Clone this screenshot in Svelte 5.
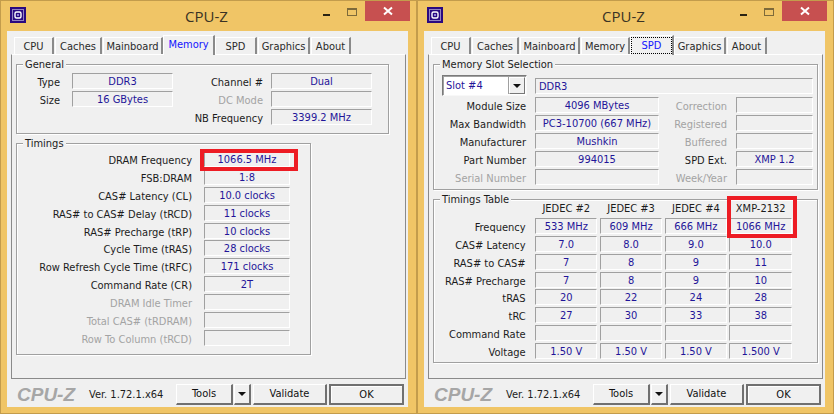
<script>
  const tabs = ['CPU', 'Caches', 'Mainboard', 'Memory', 'SPD', 'Graphics', 'About'];
  const general = [
    ['Type', 'DDR3', 'Channel #', 'Dual', false],
    ['Size', '16 GBytes', 'DC Mode', '', true],
    ['', null, 'NB Frequency', '3399.2 MHz', false]
  ];
  const timings = [
    ['DRAM Frequency', '1066.5 MHz'],
    ['FSB:DRAM', '1:8'],
    ['CAS# Latency (CL)', '10.0 clocks'],
    ['RAS# to CAS# Delay (tRCD)', '11 clocks'],
    ['RAS# Precharge (tRP)', '10 clocks'],
    ['Cycle Time (tRAS)', '28 clocks'],
    ['Row Refresh Cycle Time (tRFC)', '171 clocks'],
    ['Command Rate (CR)', '2T'],
    ['DRAM Idle Timer', '', true],
    ['Total CAS# (tRDRAM)', '', true],
    ['Row To Column (tRCD)', '', true]
  ];
  const slot = [
    ['Module Size', '4096 MBytes', false, 'Correction', '', true],
    ['Max Bandwidth', 'PC3-10700 (667 MHz)', false, 'Registered', '', true],
    ['Manufacturer', 'Mushkin', false, 'Buffered', '', true],
    ['Part Number', '994015', false, 'SPD Ext.', 'XMP 1.2', false],
    ['Serial Number', '', true, 'Week/Year', '', true]
  ];
  const heads = ['JEDEC #2', 'JEDEC #3', 'JEDEC #4', 'XMP-2132'];
  const table = [
    ['Frequency', '533 MHz', '609 MHz', '666 MHz', '1066 MHz'],
    ['CAS# Latency', '7.0', '8.0', '9.0', '10.0'],
    ['RAS# to CAS#', '7', '8', '9', '11'],
    ['RAS# Precharge', '7', '8', '9', '10'],
    ['tRAS', '20', '22', '24', '28'],
    ['tRC', '27', '30', '33', '38'],
    ['Command Rate', '', '', '', ''],
    ['Voltage', '1.50 V', '1.50 V', '1.50 V', '1.500 V']
  ];
</script>

{#snippet appIcon()}
  <svg class="icon" viewBox="0 0 16 16" width="16" height="16" aria-hidden="true">
    <rect width="16" height="16" fill="#2a0a80" />
    <rect x="2.5" y="2.5" width="11" height="11" fill="none" stroke="#fff" stroke-dasharray="1 1" />
    <rect x="5" y="5" width="6" height="6" rx="1.5" fill="none" stroke="#fff" stroke-width="1.4" />
    <rect x="7" y="7" width="2" height="2" fill="#8f80d8" />
  </svg>
{/snippet}

{#snippet titlebar()}
  <header class="titlebar">
    {@render appIcon()}
    <span class="title">CPU-Z</span>
    <div class="controls">
      <span class="min"></span>
      <span class="max"></span>
      <span class="close">
        <svg viewBox="0 0 10 10" width="10" height="10" aria-hidden="true">
          <path d="M1 1.5 9 8.5M9 1.5 1 8.5" stroke="#fff" stroke-width="2" fill="none" />
        </svg>
      </span>
    </div>
  </header>
{/snippet}

{#snippet tabRow(active)}
  <nav class="tabs">
    {#each tabs as t}
      <span class="tab" class:active={t === active} class:focus={t === active && t === 'SPD'}><span>{t}</span></span>
    {/each}
  </nav>
{/snippet}

{#snippet footer()}
  <footer class="footer">
    <span class="logo">CPU-Z</span>
    <span class="ver">Ver. 1.72.1.x64</span>
    <span class="btn tools">Tools</span>
    <span class="btn arrow"><i class="tri"></i></span>
    <span class="btn validate">Validate</span>
    <span class="btn ok">OK</span>
  </footer>
{/snippet}

<div class="screen">
  <section class="win">
    {@render titlebar()}
    <div class="client">
      {@render tabRow('Memory')}
      <div class="panel">
        <div class="group general">
          <span class="legend">General</span>
          <div class="general-grid">
            {#each general as [a, b, c, d, dis]}
              <span class="lab">{a}</span>
              {#if b === null}<span></span>{:else}<span class="val">{b}</span>{/if}
              <span class="lab" class:dis>{c}</span>
              <span class="val">{d}</span>
            {/each}
          </div>
        </div>
        <div class="group timings">
          <span class="legend">Timings</span>
          <div class="timing-grid">
            {#each timings as [a, b, dis]}
              <span class="lab" class:dis>{a}</span>
              <span class="val">{b}</span>
            {/each}
          </div>
          <span class="mark mark-dram"></span>
        </div>
      </div>
      {@render footer()}
    </div>
  </section>

  <section class="win">
    {@render titlebar()}
    <div class="client">
      {@render tabRow('SPD')}
      <div class="panel">
        <div class="group slot">
          <span class="legend">Memory Slot Selection</span>
          <div class="slot-top">
            <span class="select">Slot #4<span class="drop"><i class="tri"></i></span></span>
            <span class="val left">DDR3</span>
          </div>
          <div class="slot-grid">
            {#each slot as [a, b, d1, c, e, d2]}
              <span class="lab" class:dis={d1}>{a}</span>
              <span class="val">{b}</span>
              <span class="lab" class:dis={d2}>{c}</span>
              <span class="val">{e}</span>
            {/each}
          </div>
        </div>
        <div class="group ttable">
          <span class="legend">Timings Table</span>
          <div class="table-grid">
            <span></span>
            {#each heads as h}<span class="head">{h}</span>{/each}
            {#each table as row}
              <span class="lab">{row[0]}</span>
              {#each row.slice(1) as v}<span class="val">{v}</span>{/each}
            {/each}
          </div>
          <span class="mark mark-xmp"></span>
        </div>
      </div>
      {@render footer()}
    </div>
  </section>
</div>

<style>
  :global(body) {
    margin: 0;
    background: #fff;
  }
  .screen {
    display: flex;
    width: 835px;
    height: 414px;
    font: 11px/16px "DejaVu Sans Condensed", "DejaVu Sans", sans-serif;
    color: #1c1c1c;
    overflow: hidden;
  }
  .win {
    box-sizing: border-box;
    flex: 0 0 417px;
    height: 414px;
    background: #f0c566;
    border: 1px solid #c39c4c;
  }
  .titlebar {
    display: flex;
    align-items: flex-start;
    height: 30px;
  }
  .icon {
    margin: 6px 0 0 9px;
    flex: none;
  }
  .title {
    margin: 4px 0 0 159px;
    font: 15px/22px "Open Sans", sans-serif;
    color: #3a3324;
  }
  .controls {
    display: flex;
    margin-left: auto;
    margin-right: 6px;
  }
  .min {
    width: 7px;
    height: 2px;
    margin: 13px 17px 0 0;
    background: #2b2412;
  }
  .max {
    box-sizing: border-box;
    width: 10px;
    height: 8px;
    margin: 7px 8px 0 0;
    border: 1px solid #7d6a3a;
    border-top-width: 2px;
  }
  .close {
    display: flex;
    align-items: center;
    justify-content: center;
    width: 45px;
    height: 20px;
    background: #c75050;
  }
  .client {
    box-sizing: border-box;
    width: 401px;
    height: 376px;
    margin-left: 6px;
    background: #f0f0f0;
  }
  .tabs {
    display: flex;
    align-items: flex-end;
    height: 23px;
    padding-left: 7px;
  }
  .tab {
    box-sizing: border-box;
    position: relative;
    height: 17px;
    margin-right: 1px;
    padding-top: 1px;
    text-align: center;
    color: #2a2a2a;
    line-height: 15px;
    background: #f0f0f0;
    border-top: 1px solid #fff;
    border-left: 1px solid #fff;
    border-right: 2px solid #8a8a8a;
  }
  .tab:nth-child(1) { width: 40px; }
  .tab:nth-child(2) { width: 47px; }
  .tab:nth-child(3) { width: 60px; }
  .tab:nth-child(4) { width: 49px; }
  .tab:nth-child(5) { width: 42px; }
  .tab:nth-child(6) { width: 52px; }
  .tab:nth-child(7) { width: 40px; }
  .tab.active {
    z-index: 1;
    height: 20px;
    margin: 0 0 -1px -1px;
    padding-top: 1px;
    color: #1414ff;
  }
  .tab.active:nth-child(4) { width: 52px; }
  .tab.active:nth-child(5) { width: 44px; }
  .tab.focus span {
    display: block;
    margin: 1px 1px 0 1px;
    outline: 1px dotted #000;
    outline-offset: 0;
    height: 15px;
  }
  .panel {
    box-sizing: border-box;
    display: flex;
    flex-direction: column;
    gap: 9px;
    width: 395px;
    height: 325px;
    margin-left: 4px;
    padding: 9px 0 0 4px;
    border: 1px solid #8a8a8a;
    border-top-color: #fff;
  }
  .group {
    box-sizing: border-box;
    position: relative;
    border: 1px solid #a0a0a0;
    box-shadow: inset 1px 1px 0 #fff, 1px 1px 0 #fff;
  }
  .legend {
    position: absolute;
    top: -8px;
    left: 6px;
    padding: 0 2px;
    background: #f0f0f0;
  }
  .general { width: 373px; height: 70px; padding-top: 8px; }
  .timings { width: 295px; height: 212px; padding-top: 7px; }
  .slot { width: 385px; height: 126px; padding-top: 10px; }
  .ttable { width: 385px; height: 164px; }

  .lab {
    display: block;
    text-align: right;
    padding-top: 2px;
    white-space: nowrap;
  }
  .dis { color: #a3a3a3; }
  .val {
    box-sizing: border-box;
    display: block;
    height: 16px;
    line-height: 16px;
    text-align: center;
    white-space: nowrap;
    color: #1f1599;
    border: 1px solid #a0a0a0;
    border-right-color: #fff;
    border-bottom-color: #fff;
  }
  .val.left {
    text-align: left;
    padding-left: 3px;
    width: 278px;
  }
  .head {
    display: block;
    text-align: center;
    padding-top: 1px;
    white-space: nowrap;
  }
  .general-grid {
    display: grid;
    grid-template-columns: 55px 101px 98px 101px;
    grid-auto-rows: 18px;
  }
  .general-grid .lab:nth-child(4n + 1) { padding-right: 12px; }
  .general-grid .lab:nth-child(4n + 3) { padding-right: 8px; }
  .timing-grid {
    display: grid;
    grid-template-columns: 187px 86px;
    grid-auto-rows: 17.9px;
  }
  .timing-grid .lab { padding-right: 12px; }
  .slot-top {
    display: flex;
    align-items: center;
    gap: 8px;
    height: 21px;
    margin-bottom: 1px;
    padding-left: 8px;
  }
  .select {
    box-sizing: border-box;
    display: flex;
    justify-content: space-between;
    align-items: center;
    width: 85px;
    height: 21px;
    padding: 0 1px 0 3px;
    background: #fff;
    color: #1f1599;
    border: 1px solid #7a7a7a;
    border-right-color: #f8f8f8;
    border-bottom-color: #f8f8f8;
    box-shadow: inset 1px 1px 0 #a0a0a0;
  }
  .drop {
    box-sizing: border-box;
    display: flex;
    align-items: center;
    justify-content: center;
    width: 16px;
    height: 17px;
    background: #f0f0f0;
    border: 1px solid #fff;
    border-right-color: #777;
    border-bottom-color: #777;
    box-shadow: -1px 0 0 #a0a0a0;
  }
  .tri {
    width: 0;
    height: 0;
    border-left: 4px solid transparent;
    border-right: 4px solid transparent;
    border-top: 4px solid #111;
  }
  .slot-grid {
    display: grid;
    grid-template-columns: 101px 124px 77px 77px;
    grid-auto-rows: 18px;
  }
  .slot-grid .lab { padding-right: 9px; }
  .table-grid {
    display: grid;
    grid-template-columns: 98.67px repeat(4, 62.5px);
    column-gap: 2.33px;
    grid-auto-rows: 17.9px;
  }
  .table-grid .lab { padding-right: 7px; }
  .mark {
    box-sizing: border-box;
    position: absolute;
    border: 4px solid #ed1c24;
  }
  .mark-dram { left: 183px; top: 5px; width: 98px; height: 22px; }
  .mark-xmp { left: 293px; top: -4px; width: 70px; height: 42px; }

  .footer {
    display: flex;
    align-items: flex-start;
    height: 27px;
    padding: 5px 0 0 10px;
  }
  .logo {
    width: 72px;
    font: italic bold 19px/22px "Liberation Sans", Arial, sans-serif;
    color: #a6a6a6;
  }
  .ver {
    width: 87px;
    padding-top: 3px;
    white-space: nowrap;
  }
  .btn {
    box-sizing: border-box;
    display: flex;
    align-items: center;
    justify-content: center;
    height: 21px;
    color: #111;
    background: #f0f0f0;
    border: 1px solid #fff;
    border-right: 2px solid #707070;
    border-bottom: 2px solid #707070;
  }
  .tools { width: 57px; margin-right: 1px; }
  .arrow { width: 17px; margin-right: 2px; }
  .validate { width: 74px; margin-right: 2px; }
  .ok {
    width: 75px;
    border: 2px solid #707070;
    box-shadow: inset 1px 1px 0 #fff;
  }
</style>
